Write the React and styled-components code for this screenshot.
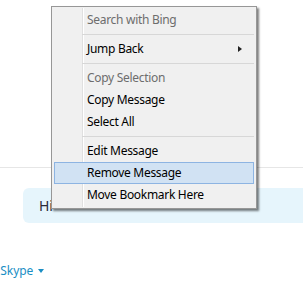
import React from "react";
import styled, { createGlobalStyle } from "styled-components";

const GlobalStyle = createGlobalStyle`
  html, body {
    margin: 0;
    padding: 0;
    background: #ffffff;
    font-family: "Noto Sans", "Open Sans", sans-serif;
  }
`;

const items = [
  { label: "Search with Bing", disabled: true },
  { separator: true },
  { label: "Jump Back", submenu: true },
  { separator: true },
  { label: "Copy Selection", disabled: true },
  { label: "Copy Message" },
  { label: "Select All" },
  { separator: true },
  { label: "Edit Message" },
  { label: "Remove Message", active: true },
  { label: "Move Bookmark Here" },
];

export default function App() {
  return (
    <>
      <GlobalStyle />
      <Page>
        <Divider />
        <Bubble>Hi</Bubble>
        <Footer>
          <Via>
            in <span>Skype</span>
          </Via>
          <Caret />
        </Footer>

        <Menu>
          <Gutter />
          {items.map((it, i) =>
            it.separator ? (
              <Separator key={i} />
            ) : (
              <Item key={i} $disabled={it.disabled} $active={it.active}>
                <span>{it.label}</span>
                {it.submenu && <SubArrow />}
              </Item>
            )
          )}
        </Menu>
      </Page>
    </>
  );
}

const Page = styled.div`
  position: relative;
  width: 303px;
  height: 282px;
  overflow: hidden;
  background: #ffffff;
`;

const Divider = styled.div`
  margin-top: 167px;
  height: 1px;
  background: #e6e6e6;
`;

const Bubble = styled.div`
  margin: 20px 0 0 23px;
  height: 35px;
  padding-left: 16px;
  display: flex;
  align-items: center;
  background: #e6f5fc;
  border-radius: 6px 0 0 6px;
  font-size: 14px;
  color: #2b2b3a;
`;

const Footer = styled.div`
  margin-top: 39px;
  margin-left: -13px;
  display: flex;
  align-items: center;
  gap: 5px;
  font-size: 12px;
  color: #1a8ec4;
`;

const Via = styled.div`
  white-space: nowrap;
  letter-spacing: -0.1px;
`;

const Caret = styled.div`
  width: 0;
  height: 0;
  margin-top: 1px;
  border-left: 3.5px solid transparent;
  border-right: 3.5px solid transparent;
  border-top: 4px solid #1a8ec4;
`;

const Menu = styled.div`
  position: absolute;
  top: 6px;
  left: 51px;
  padding: 2px;
  box-sizing: content-box;
  width: 200px;
  background: #f0f0f0;
  border: 1px solid #979797;
  box-shadow: 2px 2px 2px rgba(0, 0, 0, 0.5);
  font-size: 12px;
  line-height: 1;
  letter-spacing: -0.3px;
`;

const Gutter = styled.div`
  position: absolute;
  top: 1px;
  bottom: 1px;
  left: 30px;
  width: 1px;
  background: #e0e0e0;
  border-right: 1px solid #ffffff;
`;

const Item = styled.div`
  position: relative;
  height: 22px;
  box-sizing: border-box;
  padding: 0 11px 0 32px;
  display: flex;
  align-items: center;
  justify-content: space-between;
  color: ${(p) => (p.$disabled ? "#6d6d6d" : "#000000")};
  background: ${(p) => (p.$active ? "#d1e2f3" : "transparent")};
  border: 1px solid ${(p) => (p.$active ? "#8db4e2" : "transparent")};
`;

const SubArrow = styled.div`
  width: 0;
  height: 0;
  border-top: 3.5px solid transparent;
  border-bottom: 3.5px solid transparent;
  border-left: 4px solid #222222;
`;

const Separator = styled.div`
  position: relative;
  height: 7px;
  margin-left: 28px;
  &::after {
    content: "";
    position: absolute;
    left: 0;
    right: 0;
    top: 3px;
    height: 1px;
    background: #d7d7d7;
  }
`;
